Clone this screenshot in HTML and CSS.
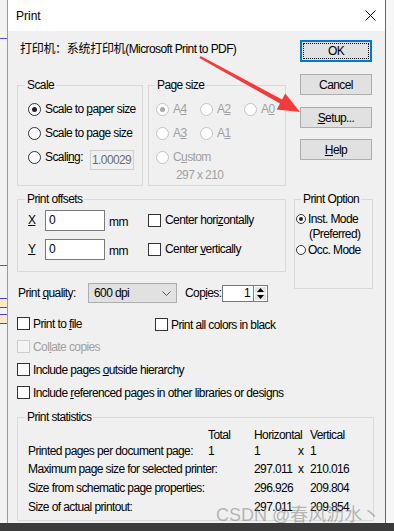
FILE: index.html
```html
<!DOCTYPE html>
<html lang="en">
<head>
  <meta charset="UTF-8">
  <title>Print</title>
  <link rel="stylesheet" href="styles.css">
</head>
<body>
<div class="screen">
  <div class="left-strip">
    <div class="mark first"></div>
    <div class="mark second"></div>
    <div class="mark box"></div>
    <div class="mark box next"></div>
  </div>

  <div class="dialog">
    <div class="titlebar">
      <span class="title">Print</span>
      <svg class="close" width="11" height="11" viewBox="0 0 11 11">
        <path d="M0.5 0.5 L10.5 10.5 M10.5 0.5 L0.5 10.5" stroke="#000" stroke-width="1" fill="none"/>
      </svg>
    </div>

    <div class="content">
      <div class="top">
        <div class="main-col">
          <div class="printer"><span class="cjk">打印机：系统打印机</span>(Microsoft Print to PDF)</div>

          <div class="group-row">
            <div class="group scale">
              <div class="group-title">Scale</div>
              <div class="scale-body">
                <div class="opt"><span class="radio on"></span><span>Scale to <u>p</u>aper size</span></div>
                <div class="opt"><span class="radio"></span><span>Scale to page size</span></div>
                <div class="opt"><span class="radio"></span><span>Scali<u>n</u>g:</span><span class="num-box">1.00029</span></div>
              </div>
            </div>

            <div class="group pagesize">
              <div class="group-title">Page size</div>
              <div class="page-body">
                <div class="page-grid">
                  <div class="opt dis"><span class="radio dis on"></span><span>A<u>4</u></span></div>
                  <div class="opt dis"><span class="radio dis"></span><span>A<u>2</u></span></div>
                  <div class="opt dis"><span class="radio dis"></span><span>A<u>0</u></span></div>
                  <div class="opt dis"><span class="radio dis"></span><span>A<u>3</u></span></div>
                  <div class="opt dis"><span class="radio dis"></span><span>A<u>1</u></span></div>
                  <div></div>
                </div>
                <div class="opt dis"><span class="radio dis"></span><span>C<u>u</u>stom</span></div>
                <div class="custom-size">297 x 210</div>
              </div>
            </div>
          </div>

          <div class="group offsets">
            <div class="group-title">Print offsets</div>
            <div class="offsets-body">
              <div class="off-row">
                <span class="axis"><u>X</u></span>
                <span class="text-box">0</span>
                <span class="unit">mm</span>
                <span class="check"></span>
                <span class="check-label">Center hori<u>z</u>ontally</span>
              </div>
              <div class="off-row">
                <span class="axis"><u>Y</u></span>
                <span class="text-box">0</span>
                <span class="unit">mm</span>
                <span class="check"></span>
                <span class="check-label">Center <u>v</u>ertically</span>
              </div>
            </div>
          </div>

          <div class="quality-row">
            <span class="quality-label">Print <u>q</u>uality:</span>
            <span class="select"><span>600 dpi</span>
              <svg class="chevron" width="9" height="5" viewBox="0 0 9 5"><path d="M0.5 0.5 L4.5 4.5 L8.5 0.5" stroke="#555" fill="none"/></svg>
            </span>
            <span class="copies-label">Cop<u>i</u>es:</span>
            <span class="copies-box">1</span>
            <span class="spinner">
              <span class="spin"><svg width="7" height="4" viewBox="0 0 7 4"><path d="M0 4 L3.5 0 L7 4 Z" fill="#000"/></svg></span>
              <span class="spin"><svg width="7" height="4" viewBox="0 0 7 4"><path d="M0 0 L3.5 4 L7 0 Z" fill="#000"/></svg></span>
            </span>
          </div>
        </div>

        <div class="side-col">
          <div class="btn default"><span class="focus">OK</span></div>
          <div class="btn cancel">Cancel</div>
          <div class="btn setup"><span><u>S</u>etup...</span></div>
          <div class="btn help"><span><u>H</u>elp</span></div>

          <div class="group option">
            <div class="group-title">Print Option</div>
            <div class="option-body">
              <div class="mode"><span class="radio small on"></span><span>Inst. Mode</span></div>
              <div class="mode preferred">(Preferred)</div>
              <div class="mode"><span class="radio small"></span><span>Occ. Mode</span></div>
            </div>
          </div>
        </div>
      </div>

      <div class="checks">
        <div class="check-row two">
          <div class="item"><span class="check"></span><span>Print to <u>f</u>ile</span></div>
          <div class="item lower"><span class="check"></span><span>Print all colors in black</span></div>
        </div>
        <div class="check-row">
          <div class="item dis"><span class="check dis"></span><span>Col<u>l</u>ate copies</span></div>
        </div>
        <div class="check-row">
          <div class="item"><span class="check"></span><span>Include pages <u>o</u>utside hierarchy</span></div>
        </div>
        <div class="check-row">
          <div class="item"><span class="check"></span><span>Include <u>r</u>eferenced pages in other libraries or designs</span></div>
        </div>
      </div>

      <div class="group stats">
        <div class="group-title">Print statistics</div>
        <div class="stats-grid">
          <span></span><span>Total</span><span>Horizontal</span><span></span><span>Vertical</span>
          <span>Printed pages per document page:</span><span>1</span><span>1</span><span>x</span><span>1</span>
          <span>Maximum page size for selected printer:</span><span></span><span>297.011</span><span>x</span><span>210.016</span>
          <span>Size from schematic page properties:</span><span></span><span>296.926</span><span></span><span>209.804</span>
          <span>Size of actual printout:</span><span></span><span>297.011</span><span></span><span>209.854</span>
        </div>
      </div>
    </div>
  </div>

  <div class="right-strip"></div>

  <svg class="arrow" width="394" height="531" viewBox="0 0 394 531">
    <polygon points="200.6,55.9 282.07,99.52 285.28,93.58 300,112 276.72,109.42 279.93,103.48 199.4,58.1" fill="#f23c3c"/>
  </svg>
  <div class="watermark">CSDN @春风沥水丶</div>
</div>
</body>
</html>
```

FILE: styles.css
```css
* {
  box-sizing: border-box;
}

body {
  margin: 0;
  width: 394px;
  height: 531px;
  overflow: hidden;
  background: #3b3b3b;
  color: #000;
  font-family: "Liberation Sans", "Noto Sans CJK SC", sans-serif;
  font-size: 12px;
  letter-spacing: -0.6px;
}

u {
  text-decoration-thickness: 1px;
  text-underline-offset: 1px;
}

.screen {
  position: relative;
  display: flex;
  height: 523px;
}

/* bits of the app behind the dialog */
.left-strip {
  width: 7px;
  background: #f3f3f3;
  display: flex;
  flex-direction: column;
}
.mark {
  height: 1px;
  background: #5a50d8;
}
.mark.first {
  margin-top: 38px;
}
.mark.second {
  margin-top: 226px;
}
.mark.box {
  height: 10px;
  margin-top: 32px;
  background: #f7ead0;
  border-top: 1px solid #4a46d0;
  border-bottom: 1px solid #4a46d0;
}
.mark.box.next {
  margin-top: 6px;
}
.right-strip {
  flex: 1;
  background: #f6f6f6;
}

.dialog {
  width: 379px;
  background: #f0f0f0;
  border-left: 1px solid #9a9a9a;
  border-right: 1px solid #666;
  display: flex;
  flex-direction: column;
  overflow: hidden;
}

.titlebar {
  flex: none;
  height: 31px;
  background: #fff;
  display: flex;
  align-items: center;
  padding: 0 9px 0 8px;
}
.title {
  font-size: 12px;
  letter-spacing: 0;
}
.close {
  margin-left: auto;
}

.content {
  flex: none;
  padding-left: 9px;
}

.top {
  display: flex;
  gap: 7px;
}
.main-col {
  width: 270px;
}
.side-col {
  width: 79px;
}

.printer {
  margin-top: 10px;
  height: 14px;
  line-height: 14px;
  white-space: nowrap;
  padding-left: 3px;
  letter-spacing: -0.6px;
}
.printer .cjk {
  font-family: "Noto Sans CJK SC", sans-serif;
  font-size: 12px;
  line-height: 14px;
  letter-spacing: -0.3px;
}

/* group boxes: the title sits on the top border */
.group {
  border: 1px solid #d9d9d9;
}
.group-title {
  width: fit-content;
  margin: -8px 0 0 7px;
  padding: 0 2px;
  height: 14px;
  line-height: 14px;
  background: #f0f0f0;
}

.group-row {
  display: flex;
  gap: 5px;
  margin-top: 30px;
}
.scale {
  width: 126px;
  height: 101px;
}
.pagesize {
  width: 138px;
  height: 101px;
}
.pagesize .group-title,
.option .group-title {
  margin-left: 6px;
}

.opt {
  display: flex;
  align-items: center;
  gap: 4px;
  height: 24px;
  white-space: nowrap;
}
.opt.dis {
  color: #a0a0a0;
}

.radio {
  width: 13px;
  height: 13px;
  flex: none;
  border: 1px solid #333;
  border-radius: 50%;
  background: #fff;
  display: flex;
  align-items: center;
  justify-content: center;
}
.radio.on::after {
  content: "";
  width: 5px;
  height: 5px;
  border-radius: 50%;
  background: #222;
}
.radio.dis {
  border-color: #c2c2c2;
}
.radio.dis.on::after {
  background: #a8a8a8;
}
.radio.small {
  width: 10px;
  height: 10px;
}
.radio.small.on::after {
  width: 4px;
  height: 4px;
}

.scale-body {
  padding: 5px 8px 0 10px;
}
.num-box {
  margin-left: auto;
  margin-top: 6px;
  width: 44px;
  height: 20px;
  line-height: 18px;
  padding-left: 1px;
  overflow: hidden;
  border: 1px solid #cfcfcf;
  color: #6d6d6d;
}

.page-body {
  padding: 5px 0 0 7px;
}
.page-grid {
  display: grid;
  grid-template-columns: 44px 44px 44px;
}
.custom-size {
  height: 12px;
  line-height: 12px;
  padding-left: 20px;
  color: #a0a0a0;
}

.offsets {
  width: 269px;
  height: 73px;
  margin-top: 13px;
}
.offsets-body {
  padding: 4px 0 0 10px;
  display: flex;
  flex-direction: column;
  gap: 9px;
}
.off-row {
  display: flex;
  align-items: center;
  height: 20px;
}
.axis {
  width: 17px;
}
.text-box {
  width: 60px;
  height: 21px;
  line-height: 19px;
  padding-left: 3px;
  background: #fff;
  border: 1px solid #7a7a7a;
}
.unit {
  width: 39px;
  margin-left: 4px;
  padding-top: 3px;
}

.check {
  width: 13px;
  height: 13px;
  flex: none;
  border: 1px solid #333;
  background: #fff;
}
.check.dis {
  border-color: #cdcdcd;
  background: #f4f4f4;
}
.check-label {
  margin-left: 4px;
}

.quality-row {
  display: flex;
  align-items: center;
  height: 20px;
  margin-top: 11px;
  padding-left: 1px;
  white-space: nowrap;
}
.quality-label {
  width: 70px;
}
.select {
  width: 89px;
  height: 20px;
  display: flex;
  align-items: center;
  padding: 0 5px;
  background: #e1e1e1;
  border: 1px solid #adadad;
}
.chevron {
  margin-left: auto;
}
.copies-label {
  margin-left: 8px;
  width: 37px;
}
.copies-box {
  width: 31px;
  height: 17px;
  line-height: 15px;
  text-align: right;
  padding-right: 3px;
  background: #fff;
  border: 1px solid #7a7a7a;
  border-right: none;
}
.spinner {
  width: 15px;
  height: 17px;
  display: flex;
  flex-direction: column;
  border: 1px solid #7a7a7a;
  background: #fff;
  padding: 1px;
  gap: 1px;
}
.spin {
  flex: 1;
  background: #e5e5e5;
  display: flex;
  align-items: center;
  justify-content: center;
}

/* buttons */
.btn {
  width: 72px;
  height: 21px;
  margin-left: 6px;
  display: flex;
  align-items: center;
  justify-content: center;
  background: #e1e1e1;
  border: 1px solid #adadad;
}
.btn.default {
  height: 22px;
  margin-top: 9px;
  border: 2px solid #0078d7;
  padding: 1px;
}
.btn.default .focus {
  flex: 1;
  align-self: stretch;
  display: flex;
  align-items: center;
  justify-content: center;
  border: 1px dotted #000;
}
.btn.cancel {
  margin-top: 12px;
}
.btn.setup {
  margin-top: 12px;
}
.btn.help {
  margin-top: 11px;
}

.option {
  width: 79px;
  height: 90px;
  margin-top: 39px;
}
.option-body {
  padding: 5px 0 0 1px;
}
.mode {
  display: flex;
  align-items: center;
  gap: 2px;
  height: 15px;
  white-space: nowrap;
}
.mode.preferred {
  padding-left: 13px;
  margin-bottom: 1px;
}

/* checkboxes under the groups */
.checks {
  margin-top: 9px;
}
.check-row {
  height: 23px;
  display: flex;
  align-items: center;
}
.check-row.two {
  display: grid;
  grid-template-columns: 138px auto;
  align-items: center;
}
.item {
  display: flex;
  align-items: center;
  gap: 3px;
  white-space: nowrap;
}
.item.lower {
  margin-top: 2px;
}
.item.dis {
  color: #a0a0a0;
}

.stats {
  width: 357px;
  height: 104px;
  margin-top: 13px;
}
.stats-grid {
  display: grid;
  grid-template-columns: 180px 46px 44px 12px auto;
  grid-template-rows: 16px 16px 19px 20px 18px;
  align-items: center;
  padding: 3px 0 0 10px;
  white-space: nowrap;
}

.arrow {
  position: absolute;
  left: 0;
  top: 0;
  pointer-events: none;
}

.watermark {
  position: absolute;
  left: 216px;
  top: 500px;
  font-size: 18px;
  letter-spacing: 0;
  color: rgba(120, 120, 120, 0.5);
  white-space: nowrap;
  pointer-events: none;
}
```
